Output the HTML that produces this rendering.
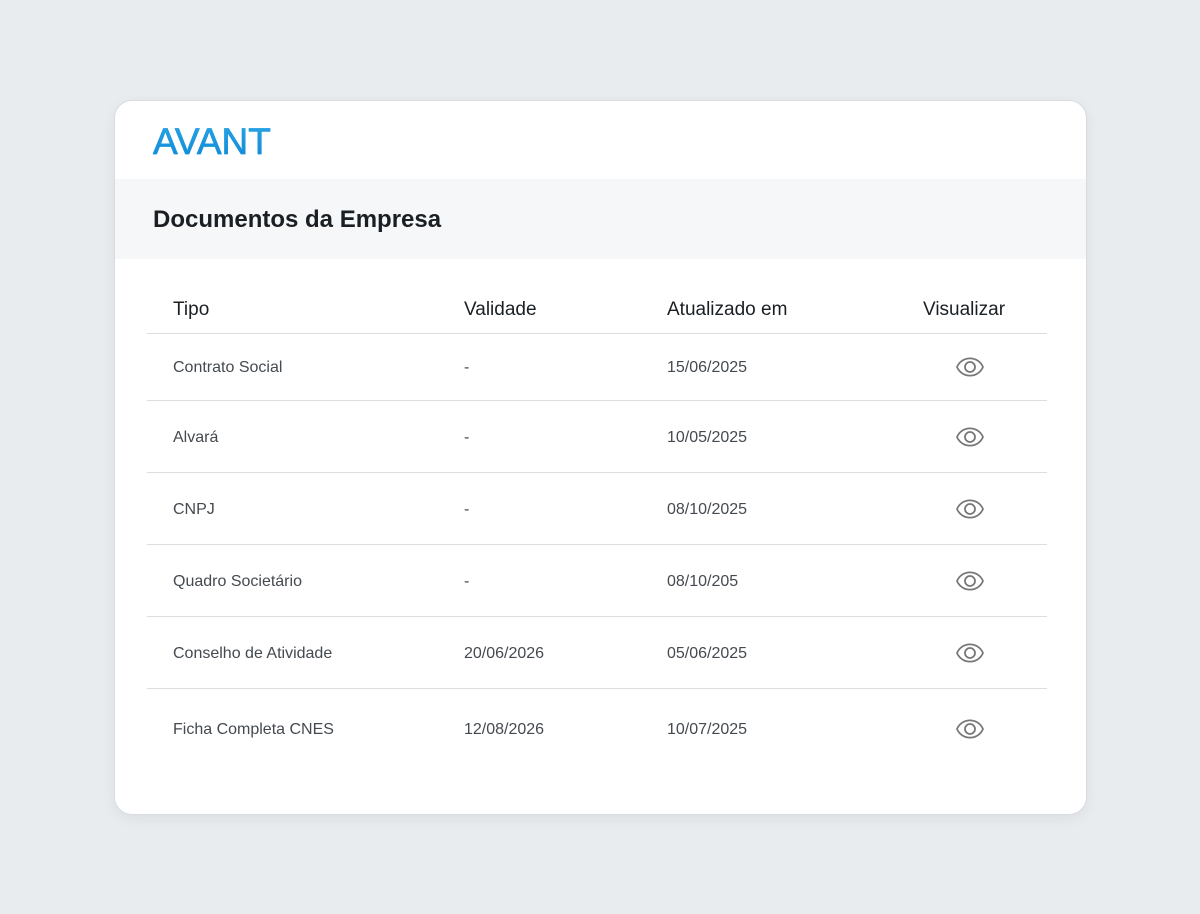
<!DOCTYPE html>
<html><head><meta charset="utf-8"><style>
*{margin:0;padding:0;box-sizing:border-box}
body{width:1200px;height:914px;background:#e9ecef;font-family:"Liberation Sans",sans-serif;position:relative;overflow:hidden}
.card{position:absolute;left:114px;top:100px;width:973px;height:715px;background:#fff;border:1px solid #d8dce0;border-radius:18px;overflow:hidden;box-shadow:0 4px 14px rgba(0,0,0,.06)}
.logo{position:absolute;left:38px;top:20px;font-size:37px;font-weight:normal;letter-spacing:0px;background:linear-gradient(180deg,#2aa8e8,#0d86d4);-webkit-background-clip:text;color:transparent;-webkit-text-stroke:0.6px #1a96dc}
.band{position:absolute;left:0;top:78px;width:100%;height:80px;background:#f5f7f9}
.band h1{position:absolute;left:38px;top:27px;font-size:24px;font-weight:bold;color:#1a1f24}
.t{position:absolute;left:32px;width:900px}
.row{position:relative;border-bottom:1px solid #dcdfe2;font-size:16px;color:#444a50}
.row:last-child{border-bottom:none}
.row span{position:absolute;top:50%;transform:translateY(-45%)}
.row span.eye{transform:translateY(-50%)}
.h{font-size:19px;color:#1a1f24}
.c1{left:26px}.c2{left:317px}.c3{left:520px}.c4{left:776px}
.eye{left:808px}
svg{display:block}
</style></head><body>
<div class="card">
<div class="logo">AVANT</div>
<div class="band"><h1>Documentos da Empresa</h1></div>
<div class="t" style="top:184px">
<div class="row h" style="height:49px"><span class="c1">Tipo</span><span class="c2">Validade</span><span class="c3">Atualizado em</span><span class="c4">Visualizar</span></div>
<div class="row" style="height:67px"><span class="c1">Contrato Social</span><span class="c2">-</span><span class="c3">15/06/2025</span><span class="eye"><svg width="30" height="20" viewBox="0 0 30 20"><path d="M2 10C7 -1.5 23 -1.5 28 10C23 21.5 7 21.5 2 10Z" fill="none" stroke="#777" stroke-width="1.7"/><circle cx="15" cy="10" r="5" fill="none" stroke="#777" stroke-width="1.8"/></svg></span></div>
<div class="row" style="height:72px"><span class="c1">Alvará</span><span class="c2">-</span><span class="c3">10/05/2025</span><span class="eye"><svg width="30" height="20" viewBox="0 0 30 20"><path d="M2 10C7 -1.5 23 -1.5 28 10C23 21.5 7 21.5 2 10Z" fill="none" stroke="#777" stroke-width="1.7"/><circle cx="15" cy="10" r="5" fill="none" stroke="#777" stroke-width="1.8"/></svg></span></div>
<div class="row" style="height:72px"><span class="c1">CNPJ</span><span class="c2">-</span><span class="c3">08/10/2025</span><span class="eye"><svg width="30" height="20" viewBox="0 0 30 20"><path d="M2 10C7 -1.5 23 -1.5 28 10C23 21.5 7 21.5 2 10Z" fill="none" stroke="#777" stroke-width="1.7"/><circle cx="15" cy="10" r="5" fill="none" stroke="#777" stroke-width="1.8"/></svg></span></div>
<div class="row" style="height:72px"><span class="c1">Quadro Societário</span><span class="c2">-</span><span class="c3">08/10/205</span><span class="eye"><svg width="30" height="20" viewBox="0 0 30 20"><path d="M2 10C7 -1.5 23 -1.5 28 10C23 21.5 7 21.5 2 10Z" fill="none" stroke="#777" stroke-width="1.7"/><circle cx="15" cy="10" r="5" fill="none" stroke="#777" stroke-width="1.8"/></svg></span></div>
<div class="row" style="height:72px"><span class="c1">Conselho de Atividade</span><span class="c2">20/06/2026</span><span class="c3">05/06/2025</span><span class="eye"><svg width="30" height="20" viewBox="0 0 30 20"><path d="M2 10C7 -1.5 23 -1.5 28 10C23 21.5 7 21.5 2 10Z" fill="none" stroke="#777" stroke-width="1.7"/><circle cx="15" cy="10" r="5" fill="none" stroke="#777" stroke-width="1.8"/></svg></span></div>
<div class="row" style="height:80px"><span class="c1">Ficha Completa CNES</span><span class="c2">12/08/2026</span><span class="c3">10/07/2025</span><span class="eye"><svg width="30" height="20" viewBox="0 0 30 20"><path d="M2 10C7 -1.5 23 -1.5 28 10C23 21.5 7 21.5 2 10Z" fill="none" stroke="#777" stroke-width="1.7"/><circle cx="15" cy="10" r="5" fill="none" stroke="#777" stroke-width="1.8"/></svg></span></div>
</div>
</div>
</body></html>
